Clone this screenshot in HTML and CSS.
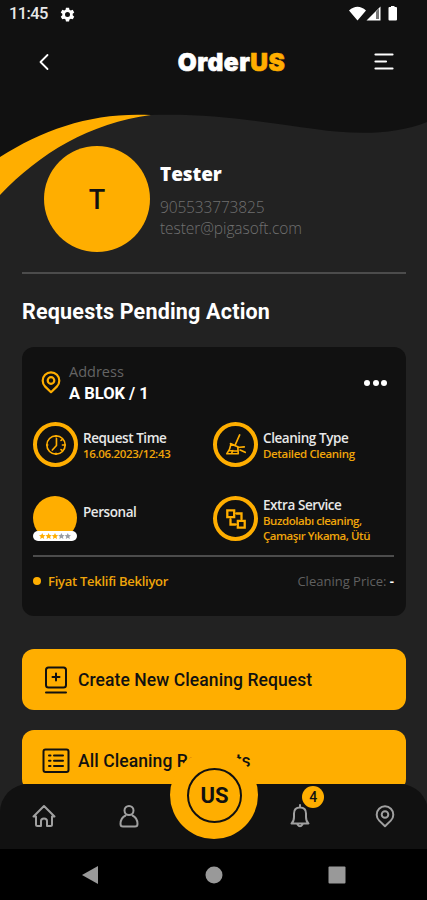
FILE: index.html
```html
<!DOCTYPE html>
<html lang="en">
<head>
<meta charset="utf-8">
<title>OrderUS</title>
<link rel="stylesheet" href="styles.css">
</head>
<body>
<svg width="0" height="0" class="defs">
  <symbol id="pin" viewBox="0 0 20 24"><path d="M10 22.2 4.2 16.6A8.3 8.3 0 1 1 15.8 16.6Z"/><circle cx="10" cy="10.5" r="3.3"/></symbol>
</svg>
<div class="phone">
  <svg class="wave" viewBox="0 0 427 200">
    <path fill="#111" d="M0 0H427V122C395 135 355 135 315 129C260 122 215 113 150 115C90 116 40 133 0 158Z"/>
    <path fill="#ffae00" d="M0 157C45 128 95 112 151 115C90 123 40 153 0 195Z"/>
  </svg>
  <div class="status">
    <span class="clock">11:45</span>
    <svg class="gear" viewBox="0 0 24 24"><path fill="#fff" fill-rule="evenodd" d="M9.5 1h5l.6 3.2 2.2 1.2 3-1.1 2.5 4.3-2.5 2.1v2.6l2.5 2.1-2.5 4.3-3-1.1-2.2 1.2-.6 3.2h-5l-.6-3.2-2.2-1.2-3 1.1-2.500-4.300 2.500-2.100v-2.600L1.200 8.600l2.500-4.300 3 1.100 2.200-1.200ZM12 8a4 4 0 1 0 0 8 4 4 0 0 0 0-8Z"/></svg>
    <svg class="signals" viewBox="0 0 50 18"><path fill="#fff" d="M0 5.500Q8.500-2 17 5.500L8.500 15.500ZM39.500 3q0-1 1-1h1.500V1h3.500v1H47q1 0 1 1v11.500q0 1-1 1h-6.500q-1 0-1-1Z"/><path fill="#fff" d="M17.500 15.500 31.500 1.500V15.500Z"/><path fill="#777" d="M27 6.500 30 3.500V14h-3Z"/></svg>
  </div>
  <header class="top">
    <svg class="back" viewBox="0 0 12 18"><path d="M9.500 2 2.500 9 9.500 16"/></svg>
    <div class="logo">Order<span>US</span></div>
    <svg class="burger" viewBox="0 0 20 18"><path d="M1.500 1.500H18.500M1.500 8.500H12M1.500 15.500H18.500"/></svg>
  </header>
  <main>
    <section class="profile">
      <div class="avatar">T</div>
      <div class="who">
        <h1>Tester</h1>
        <p class="tel">905533773825</p>
        <p class="mail">tester@pigasoft.com</p>
      </div>
    </section>
    <h2>Requests Pending Action</h2>
    <section class="card">
      <div class="address">
        <svg class="pin"><use href="#pin"/></svg>
        <div><p class="label">Address</p><p class="block">A BLOK / 1</p></div>
        <div class="dots"><i></i><i></i><i></i></div>
      </div>
      <div class="grid">
        <div class="item">
          <div class="ring"><svg viewBox="0 0 24 24"><circle cx="12" cy="12" r="10"/><path d="M12.500 5V12.500L8 17.500M12 2v1M12 21v1M2 12h1M19 12h3M17.500 7l1-.7M17.500 17l1 .7"/></svg></div>
          <div><p class="name">Request Time</p><p class="value">16.06.2023/12:43</p></div>
        </div>
        <div class="item">
          <div class="ring"><svg viewBox="0 0 24 24"><path d="M16 1 11.500 11M6 10.500 15 14.500M6.500 11C6 15 4.500 18 2 21.500H14.500L14 15M4 18 13.500 18.500M7 21.500 8.500 18M16 14.500 21 14M16.500 17.500 22 20"/></svg></div>
          <div><p class="name">Cleaning Type</p><p class="value">Detailed Cleaning</p></div>
        </div>
        <div class="item">
          <div class="person"><div class="face"></div><div class="stars"><svg viewBox="0 0 50 10"><defs><path id="st" d="M0-5 1.500-1.700 5-1.500 2.300.8 3.200 4.500 0 2.500-3.200 4.500-2.300.8-5-1.500-1.500-1.700Z"/></defs><g fill="#ffae00"><use href="#st" x="5" y="5"/><use href="#st" x="15" y="5"/><use href="#st" x="25" y="5"/></g><g fill="#9a9da4"><use href="#st" x="35" y="5"/><use href="#st" x="45" y="5"/></g></svg></div></div>
          <div><p class="name">Personal</p></div>
        </div>
        <div class="item">
          <div class="ring"><svg class="swap" viewBox="0 0 24 24"><path d="M2.500 2.500H10V10H2.500ZM14 14H21.500V21.500H14ZM12.500 6H18V12M6 12.500V18H11.500"/></svg></div>
          <div><p class="name extra">Extra Service</p><p class="value list">Buzdolabı cleaning,<br>Çamaşır Yıkama, Ütü</p></div>
        </div>
      </div>
      <div class="foot"><span class="state">Fiyat Teklifi Bekliyor</span><span class="price">Cleaning Price: <b>-</b></span></div>
    </section>
    <div class="btn">
      <svg viewBox="0 0 28 28"><rect x="4" y="1.500" width="20" height="20" rx="2.500"/><path d="M14 7.500V14.500M10.500 11H17.500M4 26.500H24"/></svg>
      <span>Create New Cleaning Request</span>
    </div>
    <div class="btn">
      <svg viewBox="0 0 28 28"><rect x="1.500" y="2.500" width="25" height="22.500" rx="2"/><path d="M7 8.500h1.500M12 8.500h9M7 13.700h1.500M12 13.700h9M7 19h1.500M12 19h9"/></svg>
      <span>All Cleaning Requests</span>
    </div>
  </main>
  <nav class="tabs">
    <div class="tab"><svg viewBox="0 0 24 24"><path d="M4 12.500H1.500L12 2 22.500 12.500H20V20.500Q20 22 18.500 22H15V17Q15 14.500 12 14.500T9 17V22H5.500Q4 22 4 20.500Z"/></svg></div>
    <div class="tab"><svg viewBox="0 0 24 24"><circle cx="12" cy="6.500" r="4.500"/><path d="M8.500 11.500Q3.500 14 3.500 20 3.500 22.500 6 22.500H18Q20.500 22.500 20.500 20 20.500 14 15.500 11.500"/></svg></div>
    <div class="tab"><div class="disc"><div class="us">US</div></div></div>
    <div class="tab"><svg viewBox="0 0 24 24"><path d="M12 1V3.500M3.500 19.500Q6 17.500 6 13V9.500Q6 3.500 12 3.500T18 9.500V13Q18 17.500 20.500 19.500ZM9.500 20.500Q12 24 14.500 20.500"/></svg><span class="badge">4</span></div>
    <div class="tab"><svg viewBox="0 0 20 24"><use href="#pin" width="20" height="24"/></svg></div>
  </nav>
  <div class="system">
    <svg viewBox="0 0 18 18"><path d="M1 9 17 0V18Z"/></svg>
    <svg viewBox="0 0 18 18"><circle cx="9" cy="9" r="8.500"/></svg>
    <svg viewBox="0 0 18 18"><rect x=".5" y=".5" width="17" height="17" rx="1"/></svg>
  </div>
</div>
</body>
</html>
```
FILE: styles.css
```css
* { box-sizing: border-box; }
body, h1, h2, p { margin: 0; }
body { background: #222; font-family: "Open Sans", sans-serif; color: #fff; }
svg { display: block; fill: none; stroke-linecap: round; stroke-linejoin: round; }
.defs { position: absolute; }
.phone { position: relative; width: 427px; height: 900px; overflow: hidden; background: #222; }
.wave { position: absolute; left: 0; top: 0; width: 427px; height: 200px; }
.status, .top, main { position: relative; }
.status { height: 28px; display: flex; align-items: center; padding: 0 28px 0 9px; }
.clock { font: 500 16.500px/28px Roboto, sans-serif; width: 51px; white-space: nowrap; letter-spacing: -.6px; color: #e8e8e8; }
.gear { width: 15px; height: 15px; }
.signals { width: 50px; height: 18px; margin-left: auto; }
.top { height: 68px; display: flex; align-items: center; justify-content: space-between; padding: 0 33px 0 38px; }
.back { width: 12px; height: 18px; stroke: #fff; stroke-width: 1.800; }
.burger { width: 20px; height: 18px; stroke: #fff; stroke-width: 2.200; }
.logo { font: 900 24.500px/30px Inter, sans-serif; letter-spacing: .45px; margin-left: 39px; -webkit-text-stroke: .6px currentColor; }
.logo span { color: #ffae00; }
main { height: 688px; overflow: hidden; padding: 50px 21px 0 22px; }
.profile { height: 128px; display: flex; border-bottom: 2px solid #4c4c4c; padding-left: 22px; }
.avatar { width: 106px; height: 106px; border-radius: 50%; background: #ffae00; color: #111; font: 500 27px/108px Roboto, sans-serif; text-align: center; }
.who { padding: 15px 0 0 10px; }
h1 { font-size: 19px; line-height: 26px; font-weight: 800; letter-spacing: -.1px; }
.tel, .mail { color: #707070; font-size: 15.500px; line-height: 21px; font-weight: 300; white-space: nowrap; }
.tel { margin-top: 10px; letter-spacing: -.15px; }
.mail { letter-spacing: -.08px; }
h2 { font: 700 21.500px/30px Roboto, sans-serif; margin-top: 23px; letter-spacing: .2px; white-space: nowrap; }
.card { height: 269px; margin-top: 20px; border-radius: 12px; background: #111; padding: 15px 12px 0 11px; }
.address { display: flex; height: 60px; align-items: flex-start; }
.pin { width: 20px; height: 24px; stroke: #ffae00; stroke-width: 2.200; margin: 8px 8px 0 8px; }
.label { color: #646464; font-size: 14.500px; line-height: 20px; }
.block { font: 700 16.500px/22px Roboto, sans-serif; margin-top: 1px; }
.dots { display: flex; gap: 2.500px; margin: 18px 7px 0 auto; }
.dots i { width: 6px; height: 6px; border-radius: 50%; background: #fff; }
.grid { display: grid; grid-template-columns: 180px 1fr; grid-template-rows: 74px 59px; }
.item { display: flex; gap: 5px; white-space: nowrap; }
.ring { width: 45px; height: 45px; border: 4px solid #ffae00; border-radius: 50%; display: grid; place-items: center; }
.ring svg { width: 22px; height: 22px; stroke: #ffae00; stroke-width: 1.800; }
.ring .swap { stroke-width: 2.500; stroke-linejoin: miter; }
.name { font-size: 13.500px; line-height: 18px; font-weight: 600; margin-top: 7px; color: #e8e8e8; letter-spacing: -.43px; }
.value { font-size: 11.500px; line-height: 15px; font-weight: 600; color: #f0a50a; letter-spacing: -.34px; margin-top: -1px; }
.extra { margin-top: 0; }
.list { letter-spacing: -.46px; }
.person { width: 44px; margin-right: 1px; }
.face { width: 44px; height: 44px; border-radius: 50%; background: #ffae00; }
.stars { position: relative; margin-top: -9px; width: 44px; height: 10px; border-radius: 5px; background: #fff; display: grid; place-items: center; }
.stars svg { width: 32px; height: 6.400px; }
.foot { border-top: 2px solid #4c4c4c; display: flex; justify-content: space-between; line-height: 18px; padding-top: 15px; font-size: 13px; white-space: nowrap; }
.state { color: #f0a50a; font-weight: 600; display: flex; align-items: center; gap: 7px; letter-spacing: -.27px; }
.state::before { content: ""; width: 8px; height: 8px; border-radius: 50%; background: #ffae00; }
.price { color: #606060; }
.price b { color: #fff; }
.btn { height: 61px; margin-top: 33px; border-radius: 12px; background: #ffae00; color: #111; display: flex; align-items: center; gap: 8px; padding-left: 20px; font: 500 17.500px/24px Roboto, sans-serif; letter-spacing: .08px; white-space: nowrap; }
.btn + .btn { margin-top: 20px; }
.btn span { padding-top: 1px; }
.btn svg { width: 28px; height: 28px; stroke: #111; stroke-width: 2; }
.tabs { position: absolute; left: 0; bottom: 51px; width: 428px; height: 65px; padding-left: 1px; background: #111; border-radius: 28px 28px 0 0; display: grid; grid-template-columns: repeat(5, 1fr); }
.tab { position: relative; display: flex; justify-content: center; padding-top: 20px; }
.tab svg { width: 24px; height: 24px; stroke: #a0a0a0; stroke-width: 2; }
.disc { position: absolute; left: 50%; top: -33px; width: 88px; height: 88px; margin-left: -44px; border-radius: 50%; background: #ffae00; display: grid; place-items: center; }
.us { width: 55px; height: 55px; border: 2px solid #111; border-radius: 50%; color: #111; font: 700 22px/52px Roboto, sans-serif; text-align: center; }
.badge { position: absolute; left: 45px; top: 2px; width: 22px; height: 22px; border-radius: 50%; background: #ffae00; color: #111; font: 500 14px/22px Roboto, sans-serif; text-align: center; }
.system { position: absolute; left: 0; bottom: 0; width: 427px; height: 51px; background: #000; display: flex; justify-content: space-between; align-items: center; padding: 0 81px; }
.system svg { width: 18px; height: 18px; fill: #999; }
```
